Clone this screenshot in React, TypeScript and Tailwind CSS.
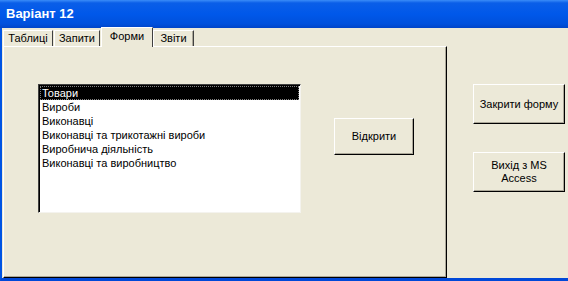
import React from "react";

const items = [
  "Товари",
  "Вироби",
  "Виконавці",
  "Виконавці та трикотажні вироби",
  "Виробнича діяльність",
  "Виконавці та виробництво",
];

const font = { fontFamily: '"Liberation Sans", Arial, sans-serif' };

function Btn({ children, className }: { children: React.ReactNode; className: string }) {
  return (
    <div
      className={`flex flex-col items-center justify-center text-center text-[11px] leading-[13px] text-black border border-t-white border-l-white border-r-black border-b-black shadow-[inset_-1px_-1px_0_#aca899] bg-[#ECE9D8] ${className}`}
    >
      {children}
    </div>
  );
}

export default function App() {
  return (
    <div style={font} className="w-[568px] h-[281px] flex flex-col bg-[#ECE9D8] overflow-hidden">
      <div className="h-[28px] shrink-0 flex items-center pl-[6px] text-white font-bold text-[13px] bg-[linear-gradient(to_bottom,#3a8cf8_0px,#0a5ee8_3px,#0058ea_14px,#0050dc_24px,#0044c8_28px)]">
        Варіант 12
      </div>
      <div className="flex-1 flex flex-row border-l-2 border-l-[#0054e3] border-b-[3px] border-b-[#0048d8]">
        <div className="w-[444px] ml-px flex flex-col">
          <div className="h-[18px] flex flex-row items-end text-[11px] text-black">
            <div className="h-[16px] w-[50px] flex items-center justify-center border-t border-l border-white border-r border-r-[#404040] mb-0">Таблиці</div>
            <div className="h-[16px] w-[46px] ml-px flex items-center justify-center border-t border-l border-white border-r border-r-[#404040]">Запити</div>
            <div className="relative z-10 h-[20px] w-[52px] -mb-px ml-px flex items-center justify-center border-t border-l border-white border-r border-r-[#404040] bg-[#ECE9D8] pb-[3px]">Форми</div>
            <div className="h-[16px] w-[41px] flex items-center justify-center border-t border-l border-white border-r border-r-[#404040] shadow-[inset_-1px_0_0_#aca899]">Звіти</div>
          </div>
          <div className="flex-1 flex flex-row border-t border-l border-white border-r border-b border-r-black border-b-black shadow-[inset_-1px_-1px_0_#aca899] pl-[34px] pt-[37px]">
            <div className="w-[263px] h-[129px] bg-white border border-t-[#404040] border-l-[#404040] border-r-[#f4f3ee] border-b-[#f4f3ee] shadow-[inset_1px_1px_0_#000] pt-[1px] pl-[1px] pr-[1px] text-[11px] leading-[14px] text-black">
              {items.map((t, i) => (
                <div
                  key={t}
                  className={
                    i === 0
                      ? "h-[14px] pl-[2px] bg-black text-white outline outline-1 outline-dotted outline-[#808080] -outline-offset-1 whitespace-nowrap"
                      : "h-[14px] pl-[2px] whitespace-nowrap"
                  }
                >
                  {t}
                </div>
              ))}
            </div>
            <Btn className="w-[80px] h-[37px] ml-[33px] mt-[34px]">Відкрити</Btn>
          </div>
        </div>
        <div className="flex-1 flex flex-col pl-[26px] pt-[56px]">
          <Btn className="w-[92px] h-[40px]">Закрити форму</Btn>
          <Btn className="w-[92px] h-[40px] mt-[28px]">
            <span>Вихід з MS</span>
            <span>Access</span>
          </Btn>
        </div>
      </div>
    </div>
  );
}
